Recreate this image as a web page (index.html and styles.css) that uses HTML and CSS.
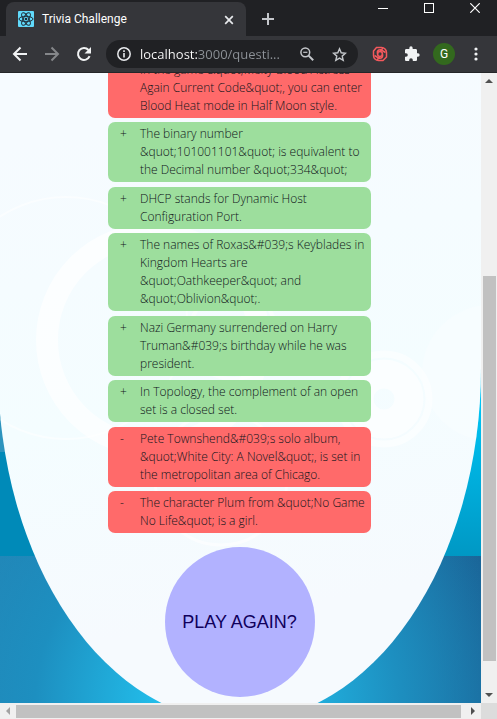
FILE: index.html
```html
<!DOCTYPE html>
<html lang="en">
<head>
<meta charset="utf-8">
<title>Trivia Challenge</title>
<link rel="stylesheet" href="styles.css">
</head>
<body>
<div class="window">
  <header class="chrome">
    <div class="tabstrip">
      <div class="tab">
        <svg class="favicon" width="16" height="16" viewBox="0 0 16 16" aria-hidden="true">
          <rect width="16" height="16" rx="1" fill="#61dafb"/>
          <g fill="none" stroke="#202d38" stroke-width="1">
            <ellipse cx="8" cy="8" rx="7" ry="2.7"/>
            <ellipse cx="8" cy="8" rx="7" ry="2.7" transform="rotate(60 8 8)"/>
            <ellipse cx="8" cy="8" rx="7" ry="2.7" transform="rotate(120 8 8)"/>
          </g>
          <circle cx="8" cy="8" r="1.3" fill="#202d38"/>
        </svg>
        <span class="tab-title">Trivia Challenge</span>
        <button class="icon-btn tab-close" aria-label="Close tab">
          <svg width="10" height="10" viewBox="0 0 10 10"><path d="M1.2 1.2l7.6 7.6M8.8 1.2L1.2 8.8" stroke="#e8eaed" stroke-width="1.7" fill="none"/></svg>
        </button>
      </div>
      <button class="icon-btn new-tab" aria-label="New tab">
        <svg width="14" height="14" viewBox="0 0 14 14"><path d="M7 1v12M1 7h12" stroke="#c4c7cb" stroke-width="2" fill="none"/></svg>
      </button>
      <div class="window-controls">
        <button class="icon-btn" aria-label="Minimize"><svg width="10" height="10" viewBox="0 0 10 10"><path d="M0 5.500h10" stroke="#fff"/></svg></button>
        <button class="icon-btn" aria-label="Maximize"><svg width="10" height="10" viewBox="0 0 10 10"><rect x=".5" y=".5" width="9" height="9" fill="none" stroke="#fff"/></svg></button>
        <button class="icon-btn" aria-label="Close"><svg width="10" height="10" viewBox="0 0 10 10"><path d="M.3.3l9.400 9.400M9.700.3L.3 9.700" stroke="#fff" stroke-width="1.200"/></svg></button>
      </div>
    </div>
    <div class="toolbar">
      <nav class="nav">
        <button class="icon-btn" aria-label="Back"><svg width="16" height="16" viewBox="0 0 16 16"><path d="M15 8H2.500M8.500 1.500L2 8l6.500 6.500" fill="none" stroke="#f1f3f4" stroke-width="2"/></svg></button>
        <button class="icon-btn" aria-label="Forward"><svg width="16" height="16" viewBox="0 0 16 16"><path d="M1 8h12.500M7.500 1.500L14 8l-6.500 6.500" fill="none" stroke="#85878a" stroke-width="2"/></svg></button>
        <button class="icon-btn" aria-label="Reload"><svg width="16" height="16" viewBox="0 0 16 16"><path d="M13.600 10.200A6 6 0 1 1 12.500 4" fill="none" stroke="#f1f3f4" stroke-width="2"/><path d="M15 1v6.500H8.500z" fill="#f1f3f4"/></svg></button>
      </nav>
      <div class="omnibox">
        <svg width="14" height="14" viewBox="0 0 14 14" aria-hidden="true"><circle cx="7" cy="7" r="6.200" fill="none" stroke="#e8eaed" stroke-width="1.500"/><path d="M7 6v4.500M7 3.200v1.700" stroke="#e8eaed" stroke-width="1.600"/></svg>
        <input class="url" type="text" aria-label="Address" value="localhost:3000/questi...">
        <button class="icon-btn" aria-label="Zoom"><svg width="14" height="14" viewBox="0 0 14 14"><circle cx="5.300" cy="5.300" r="4.400" fill="none" stroke="#c4c7cb" stroke-width="1.500"/><path d="M8.600 8.600l4.600 4.600" stroke="#c4c7cb" stroke-width="2"/><path d="M3.200 5.300h4.200" stroke="#c4c7cb" stroke-width="1.200"/></svg></button>
        <button class="icon-btn" aria-label="Bookmark"><svg width="15" height="15" viewBox="0 0 15 15"><path d="M7.500 1.800l1.700 4 4.300.4-3.300 2.900 1 4.200-3.700-2.200-3.700 2.200 1-4.200L1.500 6.200l4.300-.4z" fill="none" stroke="#c4c7cb" stroke-width="1.400"/></svg></button>
      </div>
      <div class="extensions">
        <button class="icon-btn" aria-label="Loom">
          <svg width="16" height="16" viewBox="0 0 16 16"><g fill="none" stroke="#f4595d" stroke-width="1.500"><path d="M4.500 1.500h5a5 5 0 0 1 5 5v4.500l-3.500 3.500H6.500a5 5 0 0 1-5-5V5z"/><circle cx="8" cy="8" r="2.400"/><path d="M5.600 8C4.500 5 6.500 3.400 9 3.800l4.500 2.700"/><path d="M10.400 8c1.100 3-.9 4.600-3.400 4.200L2.500 9.500"/><path d="M8 5.600l3-3.600M8 10.400L5 14"/></g></svg>
        </button>
        <button class="icon-btn" aria-label="Extensions">
          <svg width="16" height="16" viewBox="0 0 24 24"><path fill="#f1f3f4" d="M21 11h-1.500V6.500c0-1.100-.9-2-2-2H13V3a2.500 2.500 0 0 0-5 0v1.500H3.500c-1.100 0-2 .9-2 2v4.300H3a2.700 2.700 0 0 1 0 5.400H1.500v4.300c0 1.100.9 2 2 2h4.300V21a2.700 2.700 0 0 1 5.400 0v1.500h4.300c1.100 0 2-.9 2-2V16H21a2.500 2.500 0 0 0 0-5z"/></svg>
        </button>
        <button class="avatar" aria-label="Profile">G</button>
        <button class="icon-btn menu" aria-label="Menu"><svg width="4" height="14" viewBox="0 0 4 14"><g fill="#f1f3f4"><circle cx="2" cy="2" r="1.600"/><circle cx="2" cy="7" r="1.600"/><circle cx="2" cy="12" r="1.600"/></g></svg></button>
      </div>
    </div>
  </header>

  <div class="viewport">
    <main class="page">
      <section class="card">
        <svg class="rings" width="483" height="649" viewBox="-2 73 483 649" aria-hidden="true">
          <g fill="none" stroke="#fff">
            <circle cx="153" cy="340" r="106" stroke-width="22" opacity=".65"/>
            <circle cx="66" cy="318" r="121" stroke-width="2" opacity=".5"/>
            <circle cx="233" cy="335" r="44" stroke-width="4" opacity=".5"/>
            <circle cx="221" cy="479" r="66" stroke-width="3" opacity=".6"/>
            <circle cx="384" cy="399" r="45" stroke-width="7" opacity=".55"/>
            <circle cx="384" cy="399" r="25" stroke-width="29" opacity=".6"/>
          </g>
          <circle cx="490" cy="373" r="68" fill="#fff" opacity=".25"/>
        </svg>
        <ul class="results">
          <li class="result wrong"><span>-</span><p>In the game &amp;quot;Melty Blood Actress Again Current Code&amp;quot;, you can enter Blood Heat mode in Half Moon style.</p></li>
          <li class="result right"><span>+</span><p>The binary number &amp;quot;101001101&amp;quot; is equivalent to the Decimal number &amp;quot;334&amp;quot;</p></li>
          <li class="result right"><span>+</span><p>DHCP stands for Dynamic Host Configuration Port.</p></li>
          <li class="result right"><span>+</span><p>The names of Roxas&amp;#039;s Keyblades in Kingdom Hearts are<br>&amp;quot;Oathkeeper&amp;quot; and &amp;quot;Oblivion&amp;quot;.</p></li>
          <li class="result right"><span>+</span><p>Nazi Germany surrendered on Harry Truman&amp;#039;s birthday while he was<br>president.</p></li>
          <li class="result right"><span>+</span><p>In Topology, the complement of an open<br>set is a closed set.</p></li>
          <li class="result wrong"><span>-</span><p>Pete Townshend&amp;#039;s solo album, &amp;quot;White City: A Novel&amp;quot;, is set in<br>the metropolitan area of Chicago.</p></li>
          <li class="result wrong"><span>-</span><p>The character Plum from &amp;quot;No Game<br>No Life&amp;quot; is a girl.</p></li>
        </ul>
        <button class="play">PLAY AGAIN?</button>
      </section>
    </main>
    <div class="scroll vertical">
      <span class="arrow"><svg width="8" height="4" viewBox="0 0 8 4"><path d="M0 4l4-4 4 4z" fill="#505050"/></svg></span>
      <div class="track"><i class="before"></i><i class="thumb"></i><i class="after"></i></div>
      <span class="arrow"><svg width="8" height="4" viewBox="0 0 8 4"><path d="M0 0l4 4 4-4z" fill="#505050"/></svg></span>
    </div>
    <div class="scroll horizontal">
      <span class="arrow"><svg width="4" height="8" viewBox="0 0 4 8"><path d="M4 0L0 4l4 4z" fill="#a3a3a3"/></svg></span>
      <div class="track"><i class="thumb"></i></div>
      <span class="arrow"><svg width="4" height="8" viewBox="0 0 4 8"><path d="M0 0l4 4-4 4z" fill="#505050"/></svg></span>
    </div>
    <div class="corner"></div>
  </div>
</div>
</body>
</html>
```
FILE: styles.css
```css
* { box-sizing: border-box; }
body { margin: 0; font-family: Roboto, "Open Sans", sans-serif; font-size: 12px; color: #212529; }
button { border: 0; padding: 0; font: inherit; }
svg { display: block; }

.window { display: flex; flex-direction: column; height: 100vh; overflow: hidden; }
.icon-btn { display: flex; align-items: center; justify-content: center; background: none; }

.tabstrip { display: flex; height: 36px; background: #202124; padding-left: 6px; }
.tab { display: flex; align-items: center; width: 240px; margin-top: 2px; padding: 0 12px; border-radius: 8px 8px 0 0; background: #35363a; }
.tab-title { flex: 1; margin-left: 8px; color: #fff; }
.new-tab { width: 28px; margin-left: 8px; }
.new-tab, .tab-close { padding-top: 2px; }
.window-controls { display: flex; margin-left: auto; height: 16px; }
.window-controls .icon-btn { width: 46px; }
.window-controls .icon-btn:last-child { width: 45px; }

.toolbar { display: flex; align-items: center; height: 37px; background: #35363a; border-bottom: 1px solid #252629; }
.nav { display: flex; gap: 16px; padding: 0 14px 0 12px; }
.omnibox { display: flex; align-items: center; flex: 1; height: 28px; min-width: 0; padding: 0 11px; border-radius: 14px; background: #202124; }
.omnibox .icon-btn:last-child { margin-left: 18px; }
.url {
  flex: 1; min-width: 0; width: 0; margin-left: 9px; padding: 0; border: 0; outline: 0;
  font-family: "Open Sans", sans-serif; font-size: 13px; color: transparent;
  background: linear-gradient(90deg, #fff 57px, #8d9298 57px);
  -webkit-background-clip: text; background-clip: text;
}
.extensions { display: flex; align-items: center; padding: 0 19px 0 14px; gap: 16px; }
.avatar { width: 22px; height: 22px; margin: 0 3px 0 -3px; border-radius: 50%; background: #33691e; color: #fff; }

.viewport { flex: 1; min-height: 0; display: grid; grid-template: minmax(0, 1fr) 16px / minmax(0, 1fr) 16px; }
.page {
  overflow: hidden;
  background:
    radial-gradient(circle at 45% 100%, #22bce9 20%, #1d8fc0 60%, transparent 100%) bottom / 100% 147px no-repeat,
    linear-gradient(90deg, #2384b5, #1a6598) bottom / 100% 147px no-repeat,
    linear-gradient(#2d94be, #2d94be) 0 0 / 50% 379px no-repeat,
    linear-gradient(#008ab8, #008ab8) left / 50% 100% no-repeat,
    linear-gradient(#00c4f4 330px, #0098c4 483px);
}
.card {
  position: relative; overflow: hidden; margin-left: -2px; padding-bottom: 25px;
  border-radius: 0 0 50% 50% / 0 0 354px 354px;
  background: linear-gradient(170deg, #f6fbff 10%, #f4fdff 50%, #f6fafe 80%);
}
.rings { position: absolute; top: 0; left: 0; }
.results { position: relative; width: 263px; margin: -15px auto 14px; padding: 0; list-style: none; }
.result {
  display: flex; padding: 3px 2px 3px 12px; margin-bottom: 4px; border-radius: 7px;
  font-family: "Open Sans", sans-serif; font-weight: 300; line-height: 18px; color: #10151a;
}
.result:nth-child(even) { margin-bottom: 5px; }
.result:last-child { margin-bottom: 0; }
.result span { width: 20px; flex: none; }
.result p { margin: 0; }
.right { background: rgba(150, 220, 150, .93); }
.wrong { background: rgba(255, 100, 100, .96); }
.play {
  position: relative; display: block; width: 150px; height: 150px; margin: 0 auto; border-radius: 50%;
  background: #b2b2ff; color: #10005c; font-family: "Liberation Sans", Arial, sans-serif; font-size: 18px;
}

.scroll { display: flex; background: #f0f0f0; }
.vertical { flex-direction: column; }
.arrow { display: flex; flex: none; width: 16px; height: 16px; align-items: center; justify-content: center; }
.track { flex: 1; display: flex; }
.vertical .track { flex-direction: column; padding: 0 1px 0 2px; }
.horizontal .track { padding: 2px 4px 1px 0; }
.thumb { background: #c1c1c1; flex: 385; }
.before { flex: 187; }
.after { flex: 26; }
.corner { background: #dcdcdc; }
```
